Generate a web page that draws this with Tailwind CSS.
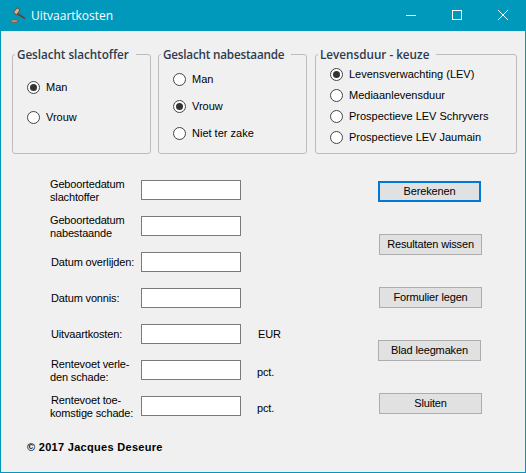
<!DOCTYPE html>
<html>
<head>
<meta charset="utf-8">
<script src="https://cdn.jsdelivr.net/npm/@tailwindcss/browser@4"></script>
</head>
<body class="m-0 overflow-hidden bg-[#f0f0f0]">
<div class="w-[526px] h-[473px] flex flex-col border border-t-0 border-[#0099bc] bg-[#f0f0f0] font-['Liberation_Sans',sans-serif] text-[11px] tracking-[-0.15px] text-black overflow-hidden">
  <!-- title bar -->
  <div class="h-[31px] -mx-px bg-[#0099bc] flex items-center shrink-0 text-white tracking-normal">
    <svg class="ml-[9px] w-[17px] h-[17px]" viewBox="0 0 17 17">
      <path d="M8 6.500 L16 11.500" stroke="#5f4330" stroke-width="1.500" fill="none"/>
      <path d="M4.500 5.500 L8 0.800 L11 3 L7.500 7.700 Z" fill="#e2b08a" stroke="#5c3a26" stroke-width="0.800"/>
      <rect x="2" y="12.500" width="6.500" height="3" rx="1.500" fill="#b98a6c" stroke="#6e5040" stroke-width="0.600"/>
    </svg>
    <span class="ml-[5px] font-['Open_Sans',sans-serif] text-[12px] leading-none">Uitvaartkosten</span>
    <div class="ml-auto flex items-center">
      <svg class="w-[46px] h-[31px]" viewBox="0 0 46 31"><path d="M18 15.500 H28" stroke="#fff" stroke-width="1"/></svg>
      <svg class="w-[46px] h-[31px]" viewBox="0 0 46 31"><rect x="18.500" y="10.500" width="9" height="9" fill="none" stroke="#fff" stroke-width="1"/></svg>
      <svg class="w-[46px] h-[31px]" viewBox="0 0 46 31"><path d="M18 10 L28 20 M28 10 L18 20" stroke="#fff" stroke-width="1"/></svg>
    </div>
  </div>

  <!-- groups -->
  <div class="flex mt-[23px] ml-[11px] text-[11px] tracking-normal">
    <div class="relative w-[139px] h-[100px] border border-[#bcbcbc] rounded-[3px] pt-[25px] pl-[14px] flex flex-col gap-[16px]">
      <span class="absolute left-[2px] -top-[9px] bg-[#f0f0f0] pl-[2px] pr-[7px] font-['Open_Sans',sans-serif] font-semibold text-[11.700px] tracking-[-0.05px] leading-[17px] text-[#2f3b4c] whitespace-nowrap">Geslacht slachtoffer</span>
      <div class="flex items-center h-[14px]"><span class="w-[13px] h-[13px] rounded-full border border-[#444] bg-white flex items-center justify-center"><span class="w-[7px] h-[7px] rounded-full bg-[#333]"></span></span><span class="ml-[6px]">Man</span></div>
      <div class="flex items-center h-[14px]"><span class="w-[13px] h-[13px] rounded-full border border-[#444] bg-white"></span><span class="ml-[6px]">Vrouw</span></div>
    </div>
    <div class="relative ml-[7px] w-[149px] h-[100px] border border-[#bcbcbc] rounded-[3px] pt-[17px] pl-[14px] flex flex-col gap-[13px]">
      <span class="absolute left-[2px] -top-[9px] bg-[#f0f0f0] pl-[2px] pr-[7px] font-['Open_Sans',sans-serif] font-semibold text-[11.700px] tracking-[-0.2px] leading-[17px] text-[#2f3b4c] whitespace-nowrap">Geslacht nabestaande</span>
      <div class="flex items-center h-[14px]"><span class="w-[13px] h-[13px] rounded-full border border-[#444] bg-white"></span><span class="ml-[6px]">Man</span></div>
      <div class="flex items-center h-[14px]"><span class="w-[13px] h-[13px] rounded-full border border-[#444] bg-white flex items-center justify-center"><span class="w-[7px] h-[7px] rounded-full bg-[#333]"></span></span><span class="ml-[6px]">Vrouw</span></div>
      <div class="flex items-center h-[14px]"><span class="w-[13px] h-[13px] rounded-full border border-[#444] bg-white"></span><span class="ml-[6px]">Niet ter zake</span></div>
    </div>
    <div class="relative ml-[8px] w-[202px] h-[100px] border border-[#bcbcbc] rounded-[3px] pt-[12px] pl-[14px] flex flex-col gap-[7px]">
      <span class="absolute left-[2px] -top-[9px] bg-[#f0f0f0] pl-[2px] pr-[7px] font-['Open_Sans',sans-serif] font-semibold text-[11.700px] leading-[17px] text-[#2f3b4c] whitespace-nowrap">Levensduur - keuze</span>
      <div class="flex items-center h-[14px]"><span class="w-[13px] h-[13px] rounded-full border border-[#444] bg-white flex items-center justify-center"><span class="w-[7px] h-[7px] rounded-full bg-[#333]"></span></span><span class="ml-[6px]">Levensverwachting (LEV)</span></div>
      <div class="flex items-center h-[14px]"><span class="w-[13px] h-[13px] rounded-full border border-[#444] bg-white"></span><span class="ml-[6px]">Mediaanlevensduur</span></div>
      <div class="flex items-center h-[14px]"><span class="w-[13px] h-[13px] rounded-full border border-[#444] bg-white"></span><span class="ml-[6px]">Prospectieve LEV Schryvers</span></div>
      <div class="flex items-center h-[14px]"><span class="w-[13px] h-[13px] rounded-full border border-[#444] bg-white"></span><span class="ml-[6px]">Prospectieve LEV Jaumain</span></div>
    </div>
  </div>

  <!-- lower part -->
  <div class="flex mt-[26px]">
    <div class="ml-[49px] w-[328px] flex flex-col gap-[16px]">
      <div class="flex items-center h-[20px]"><span class="w-[91px] pt-px leading-[13px]">Geboortedatum<br>slachtoffer</span><div class="w-[100px] h-[20px] border border-[#7a7a7a] bg-white"></div></div>
      <div class="flex items-center h-[20px]"><span class="w-[91px] pt-px leading-[13px]">Geboortedatum<br>nabestaande</span><div class="w-[100px] h-[20px] border border-[#7a7a7a] bg-white"></div></div>
      <div class="flex items-center h-[20px]"><span class="w-[91px] pl-px pt-px leading-[13px] whitespace-nowrap">Datum overlijden:</span><div class="w-[100px] h-[20px] border border-[#7a7a7a] bg-white"></div></div>
      <div class="flex items-center h-[20px]"><span class="w-[91px] pl-px pt-px leading-[13px]">Datum vonnis:</span><div class="w-[100px] h-[20px] border border-[#7a7a7a] bg-white"></div></div>
      <div class="flex items-center h-[20px]"><span class="w-[91px] pl-px pt-px leading-[13px]">Uitvaartkosten:</span><div class="w-[100px] h-[20px] border border-[#7a7a7a] bg-white"></div><span class="ml-[17px] pt-px">EUR</span></div>
      <div class="flex items-center h-[20px]"><span class="w-[91px] pt-px leading-[13px] whitespace-nowrap"><span class="pl-px">Rentevoet verle-</span><br>den schade:</span><div class="w-[100px] h-[20px] border border-[#7a7a7a] bg-white"></div><span class="ml-[16px] pt-[4px]">pct.</span></div>
      <div class="flex items-center h-[20px]"><span class="w-[91px] pt-px leading-[13px] whitespace-nowrap"><span class="pl-px">Rentevoet toe-</span><br>komstige schade:</span><div class="w-[100px] h-[20px] border border-[#7a7a7a] bg-white"></div><span class="ml-[16px] pt-[4px]">pct.</span></div>
      <div class="-ml-[23px] mt-[9px] font-bold text-[11px] tracking-[0.3px] leading-[13px]">© 2017 Jacques Deseure</div>
    </div>
    <div class="flex flex-col mt-px text-center">
      <button class="w-[103px] h-[21px] border-2 border-[#0078d7] bg-[#e1e1e1] leading-none">Berekenen</button>
      <button class="mt-[32px] ml-px w-[103px] h-[21px] border border-[#adadad] bg-[#e1e1e1] leading-none">Resultaten wissen</button>
      <button class="mt-[32px] ml-px w-[103px] h-[21px] border border-[#adadad] bg-[#e1e1e1] leading-none">Formulier legen</button>
      <button class="mt-[32px] w-[103px] h-[21px] border border-[#adadad] bg-[#e1e1e1] leading-none">Blad leegmaken</button>
      <button class="mt-[32px] ml-px w-[103px] h-[21px] border border-[#adadad] bg-[#e1e1e1] leading-none">Sluiten</button>
    </div>
  </div>
</div>
</body>
</html>
